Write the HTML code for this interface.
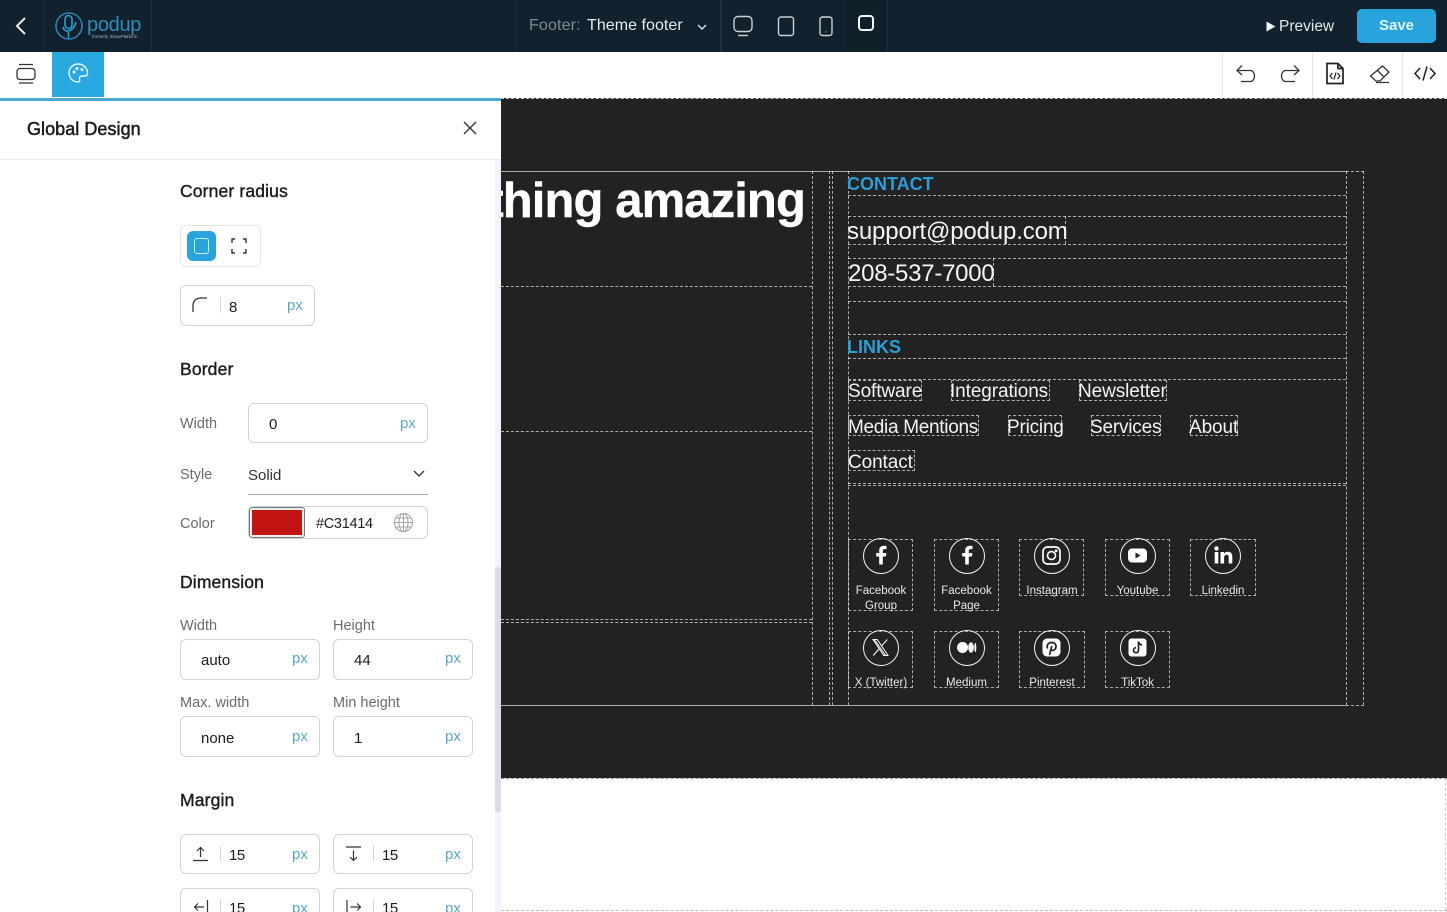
<!DOCTYPE html>
<html><head><meta charset="utf-8"><title>Global Design</title>
<style>
*{box-sizing:border-box}
html,body{margin:0;padding:0;width:1447px;height:912px;overflow:hidden;background:#fff;font-family:"Liberation Sans",sans-serif}
#r{position:relative;width:1447px;height:912px;overflow:hidden}
.a,.t,.h,.v,.box,.in,.c,.lbl,.s,.i{position:absolute}
.t{white-space:nowrap;line-height:1}
.h{height:0;border-top:1px dashed rgba(255,255,255,.62)}
.v{width:0;border-left:1px dashed rgba(255,255,255,.62)}
.box{border:1px dashed rgba(255,255,255,.62)}
.in{background:#fff;border:1px solid #d3d3d3;border-radius:6px}
.px{position:absolute;color:#5ba6c9;font-size:15px;line-height:1;white-space:nowrap}
.val{position:absolute;color:#1a1a1a;font-size:15px;line-height:1;white-space:nowrap}
.sep{position:absolute;width:1px;height:16px;background:#d8d8d8}
.hd{font-size:17.5px;color:#1c1c1c;letter-spacing:.15px;-webkit-text-stroke:.4px #1c1c1c}
.lb{font-size:14.5px;color:#6b6b6b}
.c{width:36px;height:36px;border:1.5px solid #f2f2f2;border-radius:50%}
.c svg{position:absolute;left:0;top:0}
.lbl{font-size:11.5px;color:#e9e9e9;text-align:center;line-height:15px;white-space:nowrap}
.lk{font-size:19px;color:#f3f3f3;letter-spacing:-.1px}
svg{display:block;overflow:visible}
</style></head><body><div id="r">

<!-- top bar -->
<div class="a" style="left:0;top:0;width:1447px;height:52px;background:#11212d"></div>
<div class="a" style="left:43px;top:0;width:1px;height:52px;background:#20313d"></div>
<div class="a" style="left:151px;top:0;width:1px;height:52px;background:#20313d"></div>
<div class="a" style="left:516px;top:0;width:1px;height:52px;background:#20313d"></div>
<div class="a" style="left:720px;top:0;width:2px;height:52px;background:#20313d"></div>
<div class="a" style="left:887px;top:0;width:1px;height:52px;background:#20313d"></div>
<div class="a" style="left:846px;top:0;width:41px;height:52px;background:#10202b"></div>
<svg class="a" style="left:14px;top:15px" width="14" height="22" fill="none" stroke="#e8ecee" stroke-width="2"><path d="M11 3 3 11l8 8"/></svg>
<svg class="a" style="left:55px;top:12px" width="30" height="30" fill="none" stroke="#2f83ac" stroke-width="1.6"><circle cx="14" cy="14" r="13"/><rect x="10" y="3.500" width="7" height="13" rx="3.500" stroke="#2f9ccb"/><path d="M8 15c1 6 10 6 13-5M13.500 20v6" stroke="#2f9ccb"/></svg>
<div class="t" style="left:87px;top:15px;font-size:20px;color:#2f8db8;letter-spacing:-.3px">podup</div>
<div class="t" style="left:92px;top:35px;font-size:4.5px;color:#a9bac4">formerly ShowPlatform</div>

<div class="t" style="left:529px;top:18px;font-size:16px;color:#7e8b93;letter-spacing:.15px">Footer:</div>
<div class="t" style="left:587px;top:18px;font-size:16px;color:#e6ebee;letter-spacing:.05px">Theme footer</div>
<svg class="a" style="left:697px;top:24px" width="10" height="7" fill="none" stroke="#dfe4e7" stroke-width="1.4"><path d="M1 1l4 4 4-4"/></svg>
<svg class="a" style="left:732px;top:15px" width="22" height="22" fill="none" stroke="#c9d1d6" stroke-width="1.4"><rect x="2" y="1.500" width="18" height="15" rx="4"/><path d="M6 20.500h10"/></svg>
<svg class="a" style="left:777px;top:16px" width="18" height="21" fill="none" stroke="#c9d1d6" stroke-width="1.4"><rect x="1.500" y="1" width="15" height="18.500" rx="2.500"/></svg>
<svg class="a" style="left:818px;top:16px" width="16" height="21" fill="none" stroke="#c9d1d6" stroke-width="1.4"><rect x="2" y="1" width="12" height="18.500" rx="2.500"/><path d="M8 15.500v.8"/></svg>
<svg class="a" style="left:857px;top:14px" width="19" height="19" fill="none" stroke="#f4f6f7" stroke-width="2"><rect x="2" y="2" width="14" height="14" rx="3"/></svg>

<div class="t" style="left:1279px;top:19px;font-size:15.500px;color:#e3e8eb">Preview</div>
<svg class="a" style="left:1266px;top:21px" width="10" height="11"><path d="M0.500 0.500 9.500 5.500.5 10.500z" fill="#f3f5f6"/></svg>
<div class="a" style="left:1357px;top:9px;width:79px;height:34px;background:#29a3dc;border-radius:5px"></div>
<div class="t" style="left:1357px;top:18px;width:79px;text-align:center;font-size:15px;font-weight:bold;color:#dff3fc">Save</div>

<!-- toolbar -->
<div class="a" style="left:0;top:52px;width:1447px;height:46px;background:#fff"></div>
<div class="a" style="left:52px;top:52px;width:52px;height:45px;background:#29a9e0"></div>
<svg class="a" style="left:15px;top:63px" width="22" height="22" fill="none" stroke="#333" stroke-width="1.3"><path d="M4 1.500h14M4 20h14"/><rect x="2" y="5.500" width="18" height="11" rx="3"/></svg>
<svg class="a" style="left:67px;top:62px" width="22" height="22" fill="none" stroke="#eaf7fd" stroke-width="1.4"><path d="M11 2C6 2 2 6 2 11s4 9 9 9c2 0 2-1.500 1.500-3s.5-3 2.500-3h3c1.500 0 2.500-1 2.500-3C20.500 6 16.500 2 11 2z"/><circle cx="7" cy="10" r=".8" fill="#eaf7fd"/><circle cx="10" cy="6.500" r=".8" fill="#eaf7fd"/><circle cx="15" cy="7.500" r=".8" fill="#eaf7fd"/></svg>
<div class="a" style="left:1222px;top:52px;width:1px;height:46px;background:#e6e6e6"></div>
<div class="a" style="left:1312px;top:52px;width:1px;height:46px;background:#e6e6e6"></div>
<div class="a" style="left:1402px;top:52px;width:1px;height:46px;background:#e6e6e6"></div>
<svg class="a" style="left:1235px;top:64px" width="22" height="20" fill="none" stroke="#333" stroke-width="1.3"><path d="M7 1.500 2 6.500l5 4.500M2 6.500h13c6 0 6 11 0 11H6"/></svg>
<svg class="a" style="left:1279px;top:64px" width="22" height="20" fill="none" stroke="#333" stroke-width="1.3"><path d="M15 1.500l5 5-5 4.500M20 6.500H7c-6 0-6 11 0 11h9"/></svg>
<svg class="a" style="left:1325px;top:62px" width="20" height="23" fill="none" stroke="#222" stroke-width="1.700"><path d="M2 1.500h11l5 5v15H2zM13 1.500v5h5"/><path d="M7.500 11 5 14l2.500 3M12.500 11l2.500 3-2.500 3M11 10.500 9 17.500" stroke-width="1.200"/></svg>
<svg class="a" style="left:1369px;top:64px" width="22" height="21" fill="none" stroke="#333" stroke-width="1.300"><path d="M13.500 2 20 8l-9 9H7l-5.500-5z"/><path d="M8 6l6.500 6.500M7 18.500h13"/></svg>
<svg class="a" style="left:1414px;top:66px" width="22" height="15" fill="none" stroke="#222" stroke-width="1.500"><path d="M6 2 1 7.500 6 13M16 2l5 5.500L16 13M13 .5 9 14.500"/></svg>

<!-- canvas -->
<div class="a" style="left:501px;top:98px;width:946px;height:680px;background:#222"></div>
<div class="h" style="left:501px;top:98px;width:946px;border-color:rgba(255,255,255,.75)"></div>
<div class="h" style="left:501px;top:778px;width:946px;border-color:#999"></div>
<div class="h" style="left:501px;top:910px;width:946px;border-color:#bbb"></div>
<div class="v" style="left:1445px;top:778px;height:132px;border-color:#ccc"></div>

<div class="a" style="left:501px;top:171px;width:845px;height:1px;background:#aaa"></div>
<div class="a" style="left:501px;top:705px;width:845px;height:1px;background:#aaa"></div>
<div class="h" style="left:1346px;top:171px;width:18px"></div>
<div class="h" style="left:1346px;top:705px;width:18px"></div>
<div class="v" style="left:812px;top:171px;height:534px"></div>
<div class="v" style="left:829px;top:171px;height:534px"></div>
<div class="v" style="left:832px;top:171px;height:534px"></div>
<div class="v" style="left:848px;top:171px;height:534px"></div>
<div class="v" style="left:1346px;top:171px;height:534px"></div>
<div class="v" style="left:1363px;top:171px;height:534px"></div>
<div class="h" style="left:501px;top:286px;width:311px"></div>
<div class="h" style="left:501px;top:431px;width:311px"></div>
<div class="h" style="left:501px;top:619px;width:311px"></div>
<div class="h" style="left:501px;top:622px;width:311px"></div>

<div class="t" style="left:400px;top:174px;width:405px;text-align:right;font-size:49px;font-weight:bold;color:#fff;letter-spacing:-.9px;line-height:54px;-webkit-text-stroke:.4px #fff">thing amazing</div>

<div class="h" style="left:848px;top:195px;width:498px"></div>
<div class="h" style="left:848px;top:216px;width:498px"></div>
<div class="h" style="left:848px;top:244px;width:498px"></div>
<div class="h" style="left:848px;top:258px;width:498px"></div>
<div class="h" style="left:848px;top:286px;width:498px"></div>
<div class="h" style="left:848px;top:301px;width:498px"></div>
<div class="h" style="left:848px;top:334px;width:498px"></div>
<div class="h" style="left:848px;top:358px;width:498px"></div>
<div class="h" style="left:848px;top:379px;width:498px"></div>
<div class="h" style="left:848px;top:483px;width:498px"></div>
<div class="h" style="left:848px;top:485px;width:498px"></div>
<div class="v" style="left:1065px;top:216px;height:28px"></div>
<div class="v" style="left:993px;top:258px;height:28px"></div>

<div class="t" style="left:847px;top:175px;font-size:18px;font-weight:bold;color:#2b9fd8">CONTACT</div>
<div class="t" style="left:847px;top:220px;font-size:24px;color:#f5f5f5;letter-spacing:-.15px">support@podup.com</div>
<div class="t" style="left:848px;top:262px;font-size:24px;color:#f5f5f5;letter-spacing:-.25px">208-537-7000</div>
<div class="t" style="left:847px;top:338px;font-size:18px;font-weight:bold;color:#2b9fd8">LINKS</div>

<div class="box" style="left:848px;top:380px;width:74px;height:21px"></div>
<div class="box" style="left:951px;top:380px;width:99px;height:21px"></div>
<div class="box" style="left:1079px;top:380px;width:88px;height:21px"></div>
<div class="box" style="left:848px;top:415px;width:131px;height:21px"></div>
<div class="box" style="left:1008px;top:415px;width:54px;height:21px"></div>
<div class="box" style="left:1091px;top:415px;width:70px;height:21px"></div>
<div class="box" style="left:1190px;top:415px;width:48px;height:21px"></div>
<div class="box" style="left:848px;top:450px;width:67px;height:21px"></div>
<div class="t lk" style="left:848px;top:382px">Software</div>
<div class="t lk" style="left:950px;top:382px">Integrations</div>
<div class="t lk" style="left:1078px;top:382px">Newsletter</div>
<div class="t lk" style="left:848px;top:418px;letter-spacing:-.3px">Media Mentions</div>
<div class="t lk" style="left:1007px;top:418px;letter-spacing:-.2px">Pricing</div>
<div class="t lk" style="left:1090px;top:418px;letter-spacing:-.2px">Services</div>
<div class="t lk" style="left:1189px;top:418px">About</div>
<div class="t lk" style="left:848px;top:453px">Contact</div>

<!-- social -->
<div class="box" style="left:848px;top:539px;width:65px;height:72px"></div>
<div class="box" style="left:934px;top:539px;width:65px;height:72px"></div>
<div class="box" style="left:1019px;top:539px;width:65px;height:57px"></div>
<div class="box" style="left:1105px;top:539px;width:65px;height:57px"></div>
<div class="box" style="left:1190px;top:539px;width:66px;height:57px"></div>
<div class="box" style="left:848px;top:631px;width:65px;height:57px"></div>
<div class="box" style="left:934px;top:631px;width:65px;height:57px"></div>
<div class="box" style="left:1019px;top:631px;width:66px;height:57px"></div>
<div class="box" style="left:1105px;top:631px;width:65px;height:57px"></div>

<div class="c" style="left:863px;top:538px"><svg width="33" height="33"><path d="M18.800 25.500v-8h3.100l.5-3.500h-3.600v-2.200c0-1 .4-1.700 1.800-1.700h1.900V7c-.5-.1-1.500-.2-2.700-.2-2.800 0-4.600 1.700-4.600 4.700V14h-3v3.500h3v8z" fill="#fff"/></svg></div>
<div class="c" style="left:949px;top:538px"><svg width="33" height="33"><path d="M18.800 25.500v-8h3.100l.5-3.500h-3.600v-2.200c0-1 .4-1.700 1.800-1.700h1.900V7c-.5-.1-1.500-.2-2.700-.2-2.800 0-4.600 1.700-4.600 4.700V14h-3v3.500h3v8z" fill="#fff"/></svg></div>
<div class="c" style="left:1034px;top:538px"><svg width="33" height="33" fill="none" stroke="#fff" stroke-width="1.700"><rect x="8" y="8" width="17" height="17" rx="4.500"/><circle cx="16.500" cy="16.500" r="4"/><circle cx="21.200" cy="11.800" r=".6" fill="#fff"/></svg></div>
<div class="c" style="left:1120px;top:538px"><svg width="33" height="33"><rect x="7" y="9.500" width="19" height="14" rx="4" fill="#fff"/><path d="M14.500 13.500v6l5-3z" fill="#222"/></svg></div>
<div class="c" style="left:1205px;top:538px"><svg width="33" height="33" fill="#fff"><circle cx="10.500" cy="9.500" r="2.200"/><rect x="8.700" y="13" width="3.600" height="11.500"/><path d="M14.500 13h3.400v1.700c.7-1.200 2.100-2 3.800-2 3.400 0 4.600 2 4.600 5.300v6.500h-3.600v-5.800c0-1.600-.4-2.900-2-2.900s-2.600 1.200-2.600 3v5.700h-3.600z"/></svg></div>
<div class="c" style="left:863px;top:630px"><svg width="33" height="33" fill="none" stroke="#fff" stroke-width="1"><path d="M9 8.500h4.200L24 24.500h-4.200zM10.800 9.100l10.500 15M23.300 8.500l-5.800 6.500M15 18l-5.800 6.500"/></svg></div>
<div class="c" style="left:949px;top:630px"><svg width="33" height="33" fill="#fff"><ellipse cx="12.500" cy="16.500" rx="5.500" ry="5.500"/><ellipse cx="21" cy="16.500" rx="2.800" ry="5.200"/><ellipse cx="25.300" cy="16.500" rx="1" ry="4.800"/></svg></div>
<div class="c" style="left:1034px;top:630px"><svg width="33" height="33"><rect x="7.500" y="7.500" width="18" height="18" rx="4.500" fill="#fff"/><path d="M14.500 24 16.800 15M12.700 17.500c-1.500-3 .5-6 3.900-6 3 0 4.600 2 4.400 4.300-.2 2.600-2.500 4.300-4.800 3.200" fill="none" stroke="#222" stroke-width="1.700"/></svg></div>
<div class="c" style="left:1120px;top:630px"><svg width="33" height="33"><rect x="7.500" y="7.500" width="18" height="18" rx="3" fill="#fff"/><path d="M17.500 10.500v8.700a2.500 2.500 0 1 1-2.500-2.500M17.500 10.500c.3 2 1.500 3.200 3.500 3.400" fill="none" stroke="#222" stroke-width="1.700"/></svg></div>

<div class="lbl" style="left:848px;top:584px;width:66px">Facebook<br>Group</div>
<div class="lbl" style="left:934px;top:584px;width:65px">Facebook<br>Page</div>
<div class="lbl" style="left:1019px;top:584px;width:66px">Instagram</div>
<div class="lbl" style="left:1105px;top:584px;width:65px">Youtube</div>
<div class="lbl" style="left:1190px;top:584px;width:66px">Linkedin</div>
<div class="lbl" style="left:848px;top:676px;width:66px">X (Twitter)</div>
<div class="lbl" style="left:934px;top:676px;width:65px">Medium</div>
<div class="lbl" style="left:1019px;top:676px;width:66px">Pinterest</div>
<div class="lbl" style="left:1105px;top:676px;width:65px">TikTok</div>

<!-- panel -->
<div class="a" style="left:0;top:98px;width:501px;height:814px;background:#fff"></div>
<div class="a" style="left:0;top:98px;width:501px;height:3px;background:#4ba8d0"></div>
<div class="a" style="left:0;top:159px;width:501px;height:1px;background:#e9e9e9"></div>
<div class="a" style="left:495px;top:160px;width:6px;height:752px;background:#f3f3fb"></div>
<div class="a" style="left:495px;top:567px;width:6px;height:245px;background:#dcdce8;border-radius:3px"></div>
<div class="t" style="left:27px;top:120px;font-size:18px;color:#1a1a1a;-webkit-text-stroke:.5px #1a1a1a;letter-spacing:.05px">Global Design</div>
<svg class="a" style="left:463px;top:121px" width="14" height="14" fill="none" stroke="#333" stroke-width="1.400"><path d="M1 1l12 12M13 1 1 13"/></svg>

<div class="t hd" style="left:180px;top:183px">Corner radius</div>
<div class="in" style="left:180px;top:225px;width:81px;height:42px;border-color:#e6e6e6"></div>
<div class="a" style="left:187px;top:231px;width:29px;height:30px;background:#29a3dc;border-radius:6px"></div>
<div class="a" style="left:194px;top:238px;width:15px;height:16px;border:1.500px solid #cdeaf8;border-radius:3px"></div>
<svg class="a" style="left:231px;top:238px" width="16" height="16" fill="none" stroke="#333" stroke-width="1.400"><path d="M1 5V1h3M12 1h3v4M15 11v4h-3M4 15H1v-4"/></svg>

<div class="in" style="left:180px;top:285px;width:135px;height:41px"></div>
<svg class="a" style="left:192px;top:297px" width="17" height="17" fill="none" stroke="#333" stroke-width="1.300"><path d="M1 15V9c0-5 3-8 8-8h6"/></svg>
<div class="sep" style="left:220px;top:297px"></div>
<div class="val" style="left:229px;top:300px">8</div>
<div class="px" style="left:287px;top:298px">px</div>

<div class="t hd" style="left:180px;top:361px">Border</div>
<div class="t lb" style="left:180px;top:417px">Width</div>
<div class="in" style="left:248px;top:403px;width:180px;height:40px"></div>
<div class="val" style="left:269px;top:417px">0</div>
<div class="px" style="left:400px;top:416px">px</div>
<div class="t lb" style="left:180px;top:468px">Style</div>
<div class="t" style="left:248px;top:468px;font-size:15px;color:#333">Solid</div>
<svg class="a" style="left:413px;top:470px" width="12" height="8" fill="none" stroke="#333" stroke-width="1.300"><path d="M1 1l5 5 5-5"/></svg>
<div class="a" style="left:248px;top:494px;width:180px;height:1px;background:#aaa"></div>
<div class="t lb" style="left:180px;top:517px">Color</div>
<div class="in" style="left:248px;top:506px;width:180px;height:33px"></div>
<div class="a" style="left:249px;top:507px;width:56px;height:31px;background:#c31414;border:3px solid #f0eeee;outline:1px solid #777;outline-offset:-1px;border-radius:3px"></div>
<div class="t" style="left:316px;top:517px;font-size:14.500px;color:#222;letter-spacing:-.3px">#C31414</div>
<svg class="a" style="left:393px;top:512px" width="21" height="21" fill="none" stroke="#a3a3a3" stroke-width="1"><circle cx="10.500" cy="10.500" r="9"/><ellipse cx="10.500" cy="10.500" rx="4.500" ry="9"/><path d="M10.500 1.500v18M1.500 10.500h18M3 6h15M3 15h15"/></svg>

<div class="t hd" style="left:180px;top:574px">Dimension</div>
<div class="t lb" style="left:180px;top:619px">Width</div>
<div class="t lb" style="left:333px;top:619px">Height</div>
<div class="in" style="left:180px;top:639px;width:140px;height:41px"></div>
<div class="in" style="left:333px;top:639px;width:140px;height:41px"></div>
<div class="val" style="left:201px;top:653px">auto</div>
<div class="val" style="left:354px;top:653px">44</div>
<div class="px" style="left:292px;top:651px">px</div>
<div class="px" style="left:445px;top:651px">px</div>
<div class="t lb" style="left:180px;top:696px">Max. width</div>
<div class="t lb" style="left:333px;top:696px">Min height</div>
<div class="in" style="left:180px;top:716px;width:140px;height:41px"></div>
<div class="in" style="left:333px;top:716px;width:140px;height:41px"></div>
<div class="val" style="left:201px;top:731px">none</div>
<div class="val" style="left:354px;top:731px">1</div>
<div class="px" style="left:292px;top:729px">px</div>
<div class="px" style="left:445px;top:729px">px</div>

<div class="t hd" style="left:180px;top:792px">Margin</div>
<div class="in" style="left:180px;top:834px;width:140px;height:40px"></div>
<div class="in" style="left:333px;top:834px;width:140px;height:40px"></div>
<svg class="a" style="left:193px;top:846px" width="15" height="16" fill="none" stroke="#333" stroke-width="1.200"><path d="M0 14.500h15M7.500 11V1.500M4 5l3.500-3.500L11 5"/></svg>
<div class="sep" style="left:220px;top:846px"></div>
<div class="val" style="left:229px;top:848px;letter-spacing:-.5px">15</div>
<div class="px" style="left:292px;top:847px">px</div>
<svg class="a" style="left:346px;top:846px" width="15" height="16" fill="none" stroke="#333" stroke-width="1.200"><path d="M0 1h15M7.500 4.500V14.500M4 11l3.500 3.500L11 11"/></svg>
<div class="sep" style="left:373px;top:846px"></div>
<div class="val" style="left:382px;top:848px;letter-spacing:-.5px">15</div>
<div class="px" style="left:445px;top:847px">px</div>
<div class="in" style="left:180px;top:888px;width:140px;height:40px"></div>
<div class="in" style="left:333px;top:888px;width:140px;height:40px"></div>
<svg class="a" style="left:193px;top:900px" width="16" height="14" fill="none" stroke="#333" stroke-width="1.200"><path d="M14.500 0v14M11 7H1.500M5 3.500 1.500 7 5 10.500"/></svg>
<div class="sep" style="left:220px;top:899px"></div>
<div class="val" style="left:229px;top:901px;letter-spacing:-.5px">15</div>
<div class="px" style="left:292px;top:901px">px</div>
<svg class="a" style="left:346px;top:900px" width="16" height="14" fill="none" stroke="#333" stroke-width="1.200"><path d="M1 0v14M4.500 7H14.500M11 3.500 14.500 7 11 10.500"/></svg>
<div class="sep" style="left:373px;top:899px"></div>
<div class="val" style="left:382px;top:901px;letter-spacing:-.5px">15</div>
<div class="px" style="left:445px;top:901px">px</div>

</div></body></html>
